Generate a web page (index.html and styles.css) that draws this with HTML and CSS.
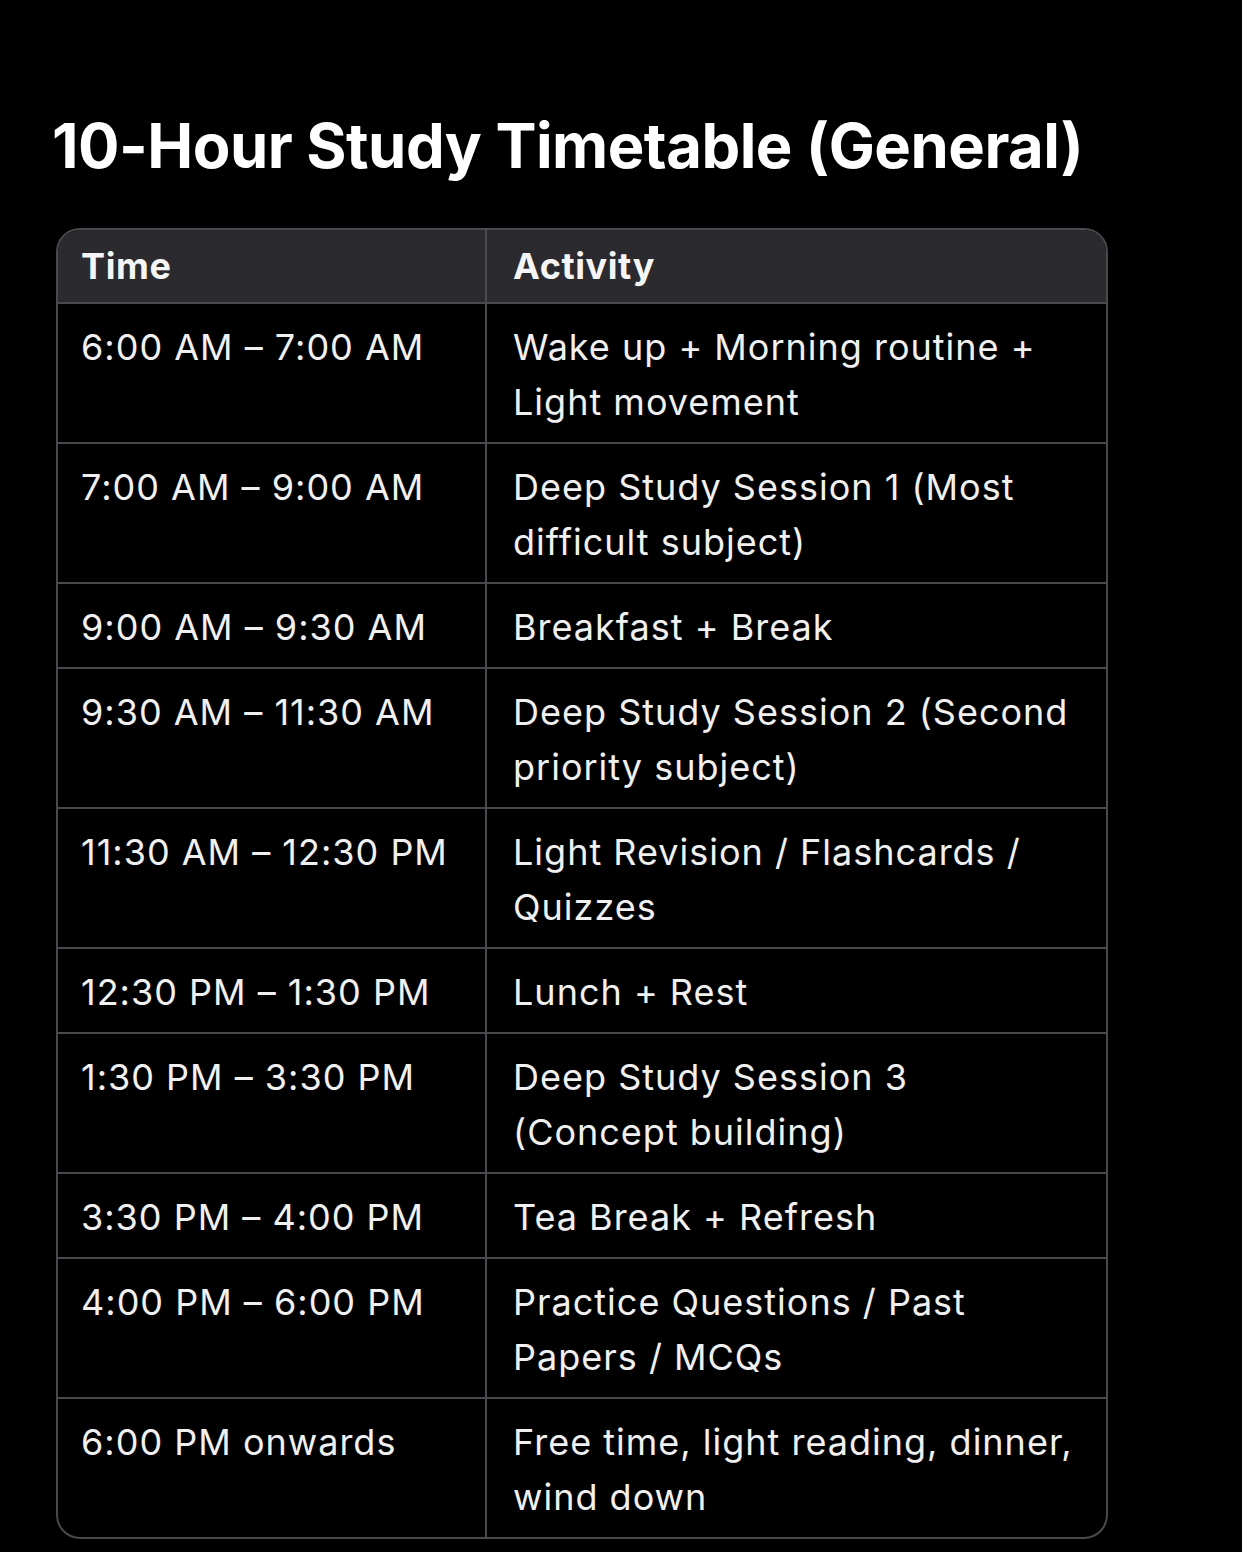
FILE: index.html
```html
<!DOCTYPE html>
<html lang="en">
<head>
<meta charset="utf-8">
<title>10-Hour Study Timetable (General)</title>
<link rel="stylesheet" href="styles.css">
</head>
<body>
<main class="page">
  <h1 class="title">10-Hour Study Timetable (General)</h1>
  <div class="table-wrap">
    <table class="tt">
      <colgroup><col class="col-time"><col class="col-act"></colgroup>
      <thead>
        <tr><th>Time</th><th>Activity</th></tr>
      </thead>
      <tbody>
        <tr><td>6:00 AM – 7:00 AM</td><td>Wake up + Morning routine + Light movement</td></tr>
        <tr><td>7:00 AM – 9:00 AM</td><td>Deep Study Session 1 (Most difficult subject)</td></tr>
        <tr><td>9:00 AM – 9:30 AM</td><td>Breakfast + Break</td></tr>
        <tr><td>9:30 AM – 11:30 AM</td><td>Deep Study Session 2 (Second priority subject)</td></tr>
        <tr><td>11:30 AM – 12:30 PM</td><td>Light Revision / Flashcards / Quizzes</td></tr>
        <tr><td>12:30 PM – 1:30 PM</td><td>Lunch + Rest</td></tr>
        <tr><td>1:30 PM – 3:30 PM</td><td>Deep Study Session 3 (Concept building)</td></tr>
        <tr><td>3:30 PM – 4:00 PM</td><td>Tea Break + Refresh</td></tr>
        <tr><td>4:00 PM – 6:00 PM</td><td>Practice Questions / Past Papers / MCQs</td></tr>
        <tr><td>6:00 PM onwards</td><td>Free time, light reading, dinner, wind down</td></tr>
      </tbody>
    </table>
  </div>
</main>
</body>
</html>
```
FILE: styles.css
```css
html, body {
  margin: 0;
  padding: 0;
  background: #000;
}
body {
  font-family: Inter, "Noto Sans", "Liberation Sans", sans-serif;
  color: #f2f2f2;
  width: 1242px;
  height: 1552px;
  overflow: hidden;
}
.page {
  padding: 108px 0 0 56px;
}
.title {
  margin: 0 0 0 -4px;
  font-size: 61.5px;
  font-weight: 700;
  letter-spacing: -0.5px;
  line-height: 76px;
  color: #fff;
}
.table-wrap {
  margin-top: 44px;
  width: 1048px;
  border: 2px solid #4a4a4e;
  border-radius: 24px;
  overflow: hidden;
}
.tt {
  width: 100%;
  border-collapse: collapse;
  table-layout: fixed;
}
.col-time { width: 428px; }
.col-act { width: auto; }
.tt th {
  background: #2b2b2f;
  text-align: left;
  font-size: 36px;
  font-weight: 700;
  letter-spacing: 0.6px;
  height: 72px;
  padding: 0 23px;
  color: #f5f5f5;
}
.tt td {
  font-size: 36px;
  font-weight: 400;
  letter-spacing: 1px;
  line-height: 55px;
  padding: 16px 23px 12px;
  vertical-align: top;
  color: #f0f0f0;
}
.tt td:last-child, .tt th:last-child {
  padding-left: 26px;
}
.tt th, .tt td {
  border: 2px solid #4a4a4e;
}
.tt tr > :first-child { border-left: none; }
.tt tr > :last-child { border-right: none; }
.tt thead th { border-top: none; }
.tt tbody tr:last-child td { border-bottom: none; }
```
